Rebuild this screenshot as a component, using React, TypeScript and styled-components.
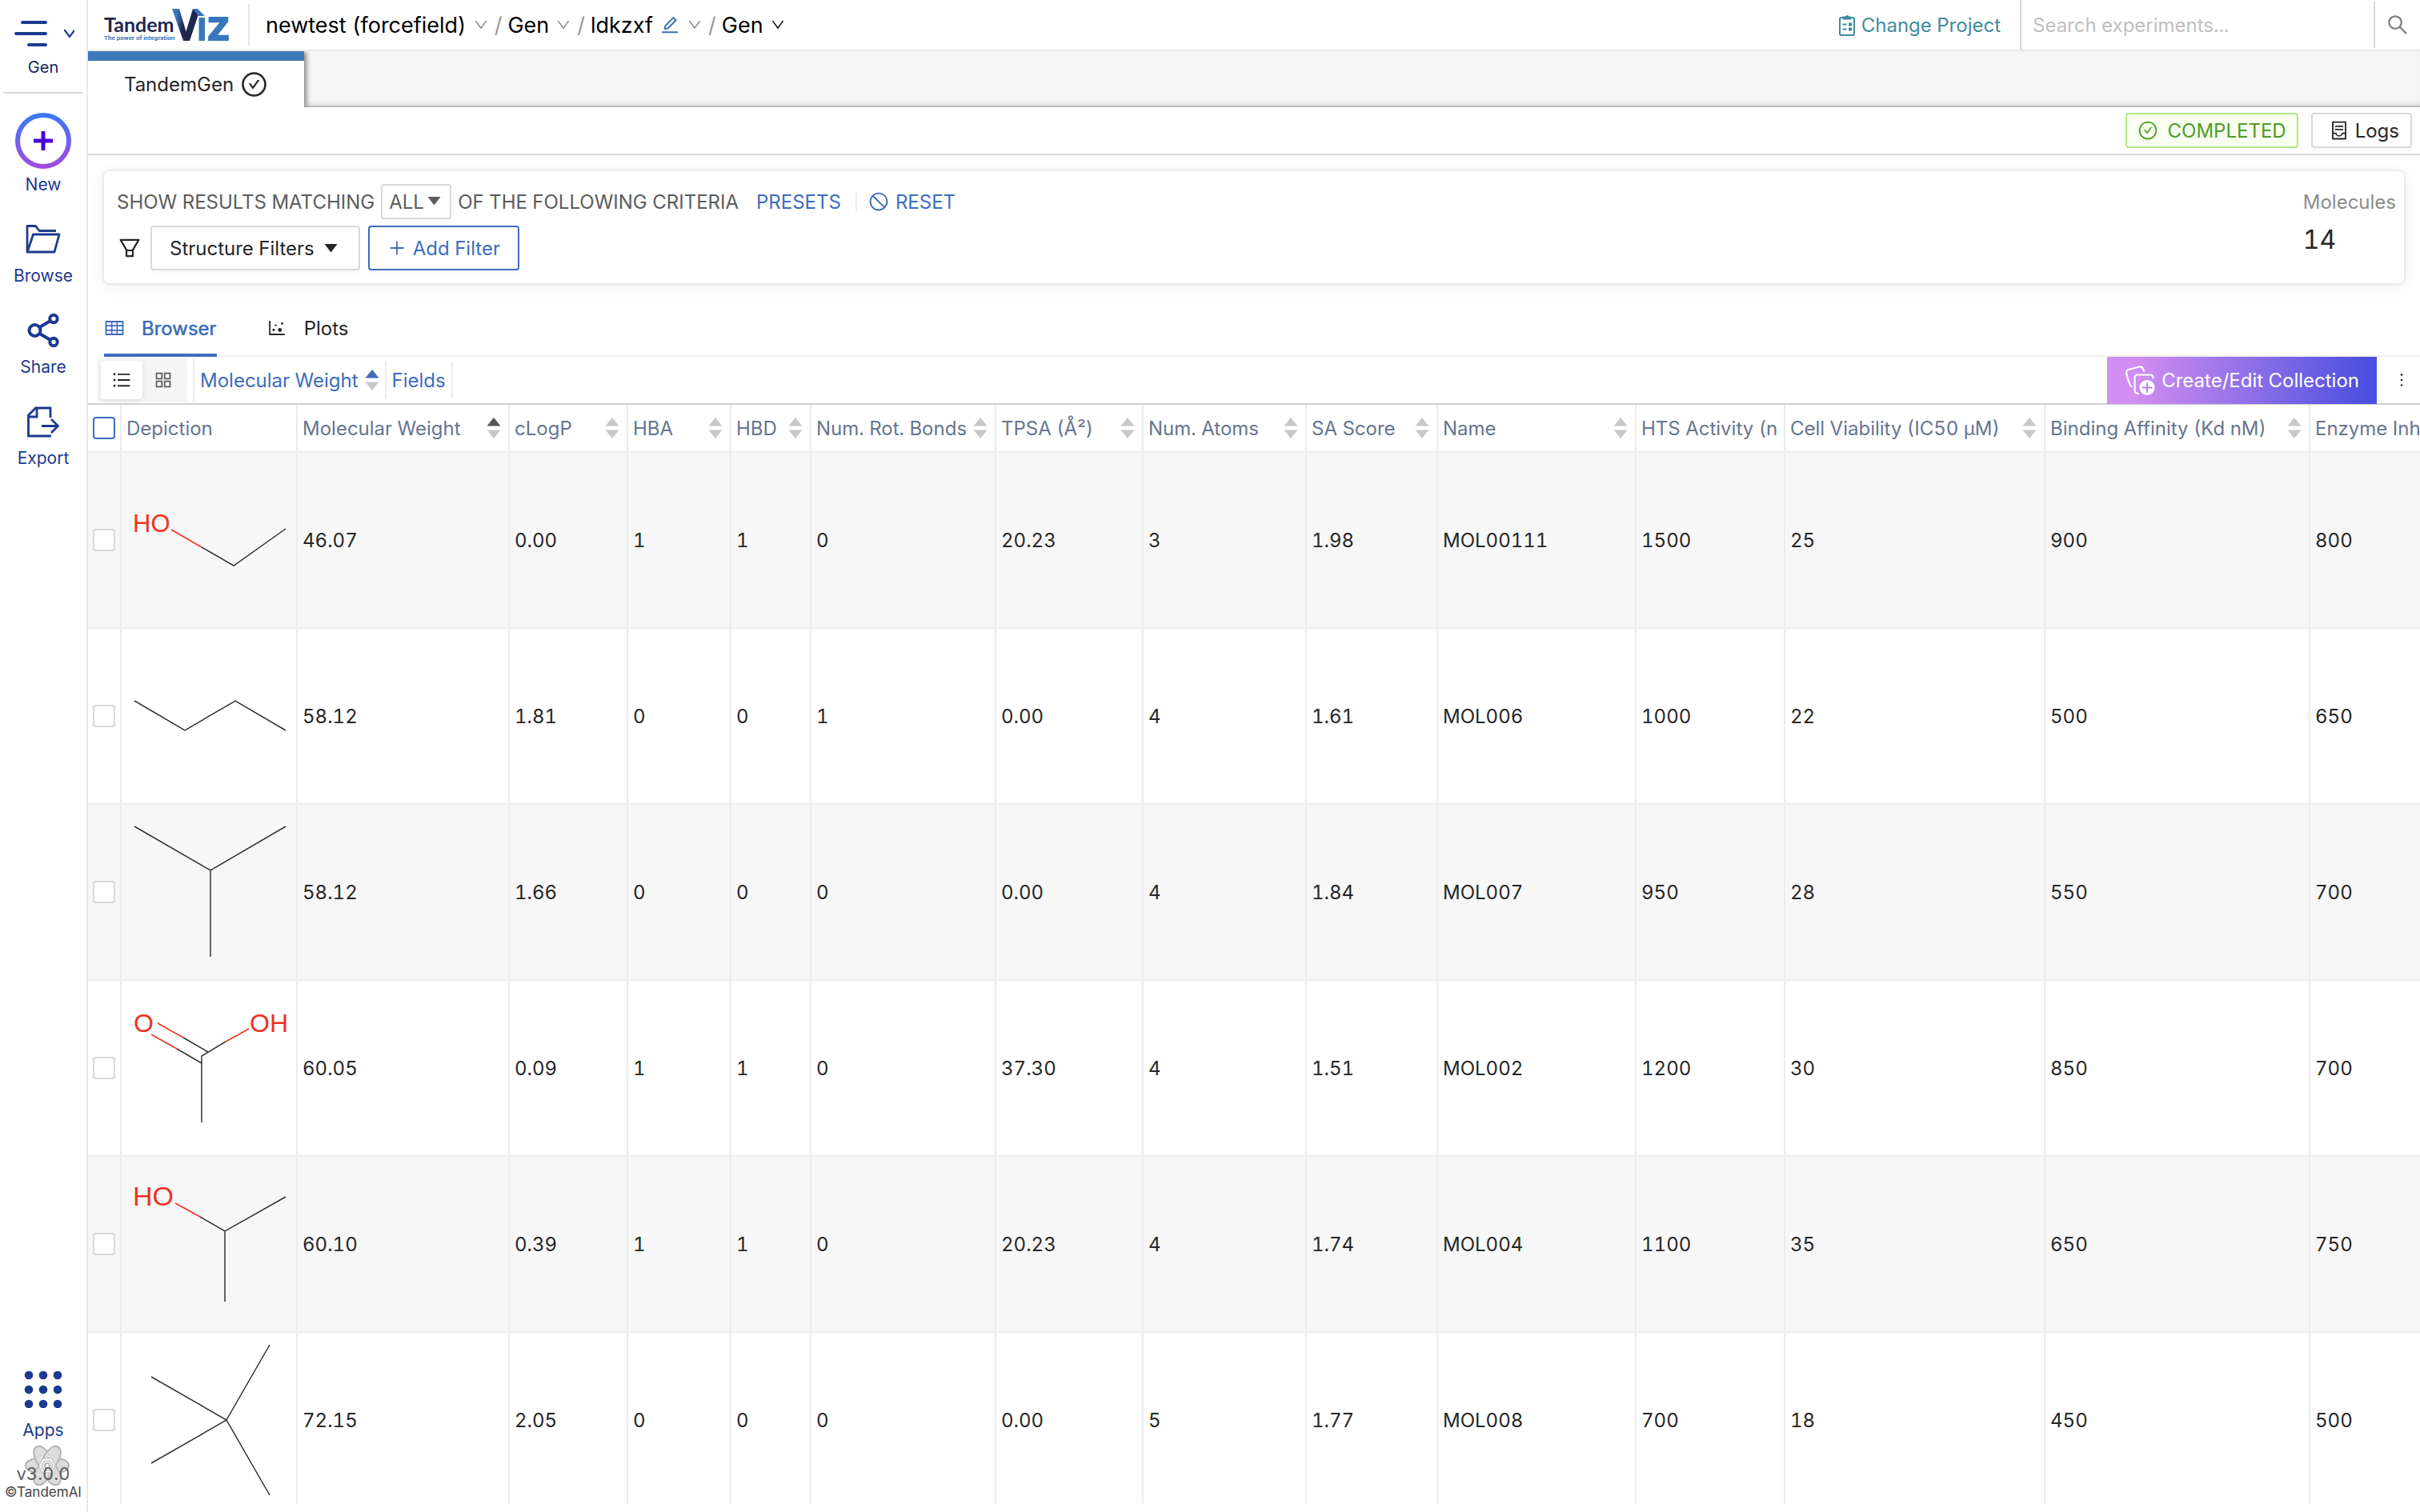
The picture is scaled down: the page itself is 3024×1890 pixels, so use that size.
import React from 'react';
import styled, { createGlobalStyle, css } from 'styled-components';
import {
  AiOutlineAppstore,
  AiOutlineCheckCircle,
  AiOutlineContainer,
  AiOutlineDotChart,
  AiOutlineDown,
  AiOutlineEdit,
  AiOutlineFilter,
  AiOutlineFolderOpen,
  AiOutlineMore,
  AiOutlinePlus,
  AiOutlineSearch,
  AiOutlineShareAlt,
  AiOutlineStop,
  AiOutlineTable,
  AiOutlineUnorderedList,
} from 'react-icons/ai';

const color = {
  text: '#262626',
  muted: '#5c5c5c',
  faint: '#8c8c8c',
  blue: '#3c6dbd',
  navy: '#1c3a8f',
  teal: '#3f8c9c',
  head: '#66758f',
  line: '#ececec',
  border: '#d9d9d9',
  stripe: '#f7f7f7',
};

const GlobalStyle = createGlobalStyle`
  *, *::before, *::after { box-sizing: border-box; }
  html, body, #root { height: 100%; }
  body {
    margin: 0;
    background: #fff;
    color: ${color.text};
    font: 400 24px/33px Inter, "Liberation Sans", sans-serif;
    font-variant-numeric: tabular-nums;
    overflow: hidden;
  }
  button, input, select { font: inherit; color: inherit; margin: 0; }
  button { background: none; border: 0; padding: 0; cursor: pointer; }
  a { color: inherit; text-decoration: none; }
  svg { display: block; flex: none; }
`;

const Shell = styled.div`
  display: grid;
  grid-template-columns: 110px minmax(0, 1fr);
  height: 100vh;
`;

/* ---------- Sidebar ---------- */

const Sidebar = styled.nav`
  display: flex;
  flex-direction: column;
  align-items: center;
  border-right: 2px solid #e8e8e8;
  color: ${color.navy};
  font-size: 21px;
  line-height: 28px;
`;

const SideHead = styled.button`
  display: flex;
  flex-direction: column;
  align-items: center;
  gap: 12px;
  width: 100px;
  height: 117px;
  padding-top: 26px;
  margin-bottom: 24px;
  border-bottom: 2px solid ${color.border};
  color: #14235a;
  font-size: 20px;
`;

const SideItem = styled.button<{ $gap?: number }>`
  display: flex;
  flex-direction: column;
  align-items: center;
  gap: ${(p) => p.$gap ?? 10}px;
  margin-bottom: 32px;
`;

const IconSlot = styled.span`
  display: grid;
  place-items: center;
  width: 48px;
  height: 44px;
`;

const SideFoot = styled.div`
  display: flex;
  flex-direction: column;
  align-items: center;
  margin-top: auto;
  padding-bottom: 16px;
`;

const AppsButton = styled(SideItem)`
  margin-bottom: 26px;
`;

const Version = styled.div`
  position: relative;
  color: ${color.muted};
  font-size: 22px;

  svg {
    position: absolute;
    left: 9px;
    bottom: -2px;
    z-index: -1;
  }
`;

const Copyright = styled.div`
  color: #444;
  font-size: 17px;
  line-height: 18px;
`;

/* ---------- Header ---------- */

const Main = styled.main`
  display: flex;
  flex-direction: column;
  min-width: 0;
  height: 100vh;
`;

const TopBar = styled.header`
  display: flex;
  align-items: center;
  flex: none;
  height: 64px;
  border-bottom: 2px solid #e8e8e8;
`;

const Brand = styled.a`
  display: flex;
  align-items: center;
  height: 52px;
  padding: 0 20px;
  border-right: 2px solid #e5e5e5;

  svg {
    overflow: visible;
  }
`;

const Crumbs = styled.nav`
  display: flex;
  align-items: center;
  gap: 7px;
  margin-left: 20px;
  color: #000;
  font-size: 27px;
`;

const Crumb = styled.button<{ $open?: boolean }>`
  display: flex;
  align-items: center;
  gap: 8px;

  svg:last-child {
    color: ${(p) => (p.$open ? '#111' : color.faint)};
  }
`;

const Slash = styled.span`
  color: #999;
`;

const ProjectLink = styled.a`
  display: flex;
  align-items: center;
  gap: 8px;
  margin: 0 24px 0 auto;
  color: ${color.teal};
`;

const SearchForm = styled.form`
  display: flex;
  align-items: center;
  align-self: stretch;
  width: 500px;
  border-left: 2px solid ${color.border};
`;

const SearchInput = styled.input`
  flex: 1;
  min-width: 0;
  height: 58px;
  padding: 0 14px;
  border: 0;
  outline: 0;
  background: none;

  &::placeholder {
    color: #bfbfbf;
    opacity: 1;
  }
`;

const SearchButton = styled.button`
  display: grid;
  place-items: center;
  width: 58px;
  height: 58px;
  border-left: 2px solid ${color.border};
  color: #7d7d7d;
`;

/* ---------- Experiment tabs and status ---------- */

const TabStrip = styled.div`
  display: flex;
  flex: none;
  height: 70px;
  background: #f6f6f6;
  box-shadow: inset 0 -2px 0 #bdbdbd, inset 0 -8px 8px -6px rgba(0, 0, 0, 0.18);
`;

const ExperimentTab = styled.button`
  display: flex;
  align-items: center;
  justify-content: center;
  gap: 8px;
  width: 270px;
  border-top: 12px solid #3d79b8;
  background: #fff;
  box-shadow: 4px 0 6px -1px rgba(0, 0, 0, 0.45);
  clip-path: inset(0 -16px 0 0);
`;

const StatusRow = styled.div`
  display: flex;
  align-items: center;
  justify-content: flex-end;
  flex: none;
  gap: 16px;
  height: 60px;
  padding-right: 10px;
  border-bottom: 2px solid ${color.border};
`;

const StatusTag = styled.span`
  display: flex;
  align-items: center;
  gap: 12px;
  height: 44px;
  padding: 0 13px;
  border: 2px solid #b7e58c;
  border-radius: 4px;
  background: #f8ffee;
  color: #4f9a2a;
`;

const outlined = css`
  display: flex;
  align-items: center;
  border: 2px solid ${color.border};
  border-radius: 4px;
  background: #fff;
  box-shadow: 0 4px 0 rgba(0, 0, 0, 0.02);
`;

const LogsButton = styled.button`
  ${outlined}
  gap: 7px;
  height: 44px;
  padding: 0 14px 0 20px;
`;

/* ---------- Filter card ---------- */

const FilterCard = styled.section`
  display: flex;
  justify-content: space-between;
  flex: none;
  margin: 20px 20px 20px;
  padding: 16px 10px 16px 16px;
  border-radius: 6px;
  background: #fff;
  box-shadow: 0 0 4px rgba(0, 0, 0, 0.16), 0 4px 24px rgba(40, 60, 90, 0.08);
`;

const FilterRows = styled.div`
  display: flex;
  flex-direction: column;
  gap: 8px;
`;

const FilterRow = styled.div<{ $height: number; $gap: number }>`
  display: flex;
  align-items: center;
  gap: ${(p) => p.$gap}px;
  height: ${(p) => p.$height}px;
  color: ${color.muted};
  white-space: nowrap;
`;

const MatchField = styled.span`
  position: relative;
  display: flex;

  svg {
    position: absolute;
    right: 13px;
    top: 15px;
    pointer-events: none;
  }
`;

const MatchSelect = styled.select`
  ${outlined}
  appearance: none;
  width: 88px;
  height: 44px;
  padding: 0 8px;
  color: ${color.muted};
`;

const LinkButton = styled.button`
  display: flex;
  align-items: center;
  gap: 8px;
  color: ${color.blue};
`;

const Presets = styled(LinkButton)`
  margin: 0 10px 0 14px;
`;

const Reset = styled(LinkButton)`
  margin-left: 6px;
`;

const Divider = styled.span<{ $height: number }>`
  width: 2px;
  height: ${(p) => p.$height}px;
  background: ${color.line};
`;

const FunnelSlot = styled.span`
  display: grid;
  place-items: center;
  width: 32px;
  color: ${color.text};
`;

const StructureButton = styled.button`
  ${outlined}
  gap: 12px;
  height: 56px;
  padding: 0 26px 0 22px;
  color: ${color.text};
`;

const AddButton = styled.button`
  ${outlined}
  gap: 8px;
  height: 56px;
  padding: 0 22px;
  border-color: ${color.blue};
  color: ${color.blue};
`;

const Stat = styled.dl`
  margin: 6px 0 0;

  dt {
    color: ${color.faint};
  }

  dd {
    margin: 10px 0 0;
    font-size: 32px;
    line-height: 41px;
  }
`;

/* ---------- View tabs and toolbar ---------- */

const ViewTabs = styled.div`
  display: flex;
  flex: none;
  gap: 62px;
  margin-left: 20px;
  box-shadow: inset 0 -2px 0 #f0f0f0;
`;

const ViewTab = styled.button<{ $active?: boolean }>`
  display: flex;
  align-items: center;
  gap: 21px;
  height: 72px;
  color: ${(p) => (p.$active ? color.blue : color.text)};
  text-shadow: ${(p) => (p.$active ? '0 0 1px currentColor' : 'none')};
  box-shadow: ${(p) => (p.$active ? `inset 0 -4px 0 ${color.blue}` : 'none')};
`;

const Toolbar = styled.div`
  display: flex;
  align-items: center;
  flex: none;
  gap: 7px;
  height: 60px;
  padding: 0 0 2px 12px;
  box-shadow: inset 0 -2px 0 #d0d0d0;
`;

const Segmented = styled.div`
  display: flex;
  align-items: center;
  gap: 4px;
  height: 56px;
  padding: 0 8px 0 4px;
  border-radius: 4px;
  background: #f5f5f5;
`;

const Segment = styled.button<{ $active?: boolean }>`
  display: grid;
  place-items: center;
  width: ${(p) => (p.$active ? 52 : 44)}px;
  height: 48px;
  border-radius: 4px;
  color: ${(p) => (p.$active ? color.text : color.muted)};
  background: ${(p) => (p.$active ? '#fff' : 'none')};
  box-shadow: ${(p) => (p.$active ? '0 2px 6px rgba(0, 0, 0, 0.1)' : 'none')};
`;

const CollectionButton = styled.button`
  display: flex;
  align-items: center;
  align-self: flex-start;
  gap: 8px;
  height: 59px;
  margin-left: auto;
  padding: 0 22px;
  background: linear-gradient(90deg, #d28ef0 10%, #4a50df 97%);
  color: #fff;
`;

const MoreButton = styled.button`
  display: grid;
  place-items: center;
  width: 47px;
  height: 48px;
`;

/* ---------- Results table ---------- */

const TableArea = styled.div`
  flex: 1;
  min-height: 0;
  margin-bottom: 10px;
  overflow: hidden;
`;

const Table = styled.table`
  table-layout: fixed;
  width: 3200px;
  border-collapse: separate;
  border-spacing: 0;
`;

const cell = css`
  padding: 0 6px;
  border-right: 2px solid ${color.line};
  border-bottom: 2px solid ${color.line};
  text-align: left;
`;

const HeadCell = styled.th`
  ${cell}
  height: 60px;
  color: ${color.head};
  font-weight: 400;
`;

const HeadInner = styled.div`
  display: flex;
  align-items: center;
  justify-content: space-between;
  overflow: hidden;
  white-space: nowrap;

  svg {
    margin-right: 3px;
  }
`;

const Row = styled.tr`
  &:nth-child(odd) {
    background: ${color.stripe};
  }
`;

const Cell = styled.td`
  ${cell}
  height: 220px;
`;

const DrawingCell = styled(Cell)`
  padding: 0;
`;

const Checkbox = styled.input<{ $accent?: boolean }>`
  appearance: none;
  display: block;
  width: 28px;
  height: 28px;
  margin: 0;
  border: 2px solid ${(p) => (p.$accent ? color.blue : color.border)};
  border-radius: 4px;
  background: #fff;
`;

/* ---------- Drawings ---------- */

const Caret = ({ fill = 'currentColor' }: { fill?: string }) => (
  <svg width="17" height="12" viewBox="0 0 17 12" fill={fill}>
    <path d="M0.5 1h16L8.5 11.500z" />
  </svg>
);

const Sorter = ({ up = '#c8c8c8' }: { up?: string }) => (
  <svg width="18" height="28" viewBox="0 0 18 28">
    <path d="M9 1l8.500 10.500H.5z" fill={up} />
    <path d="M9 27l8.500-10.500H.5z" fill="#c8c8c8" />
  </svg>
);

const MenuGlyph = () => (
  <svg width="78" height="32" viewBox="0 0 78 32" fill="none" stroke={color.navy} strokeLinecap="round">
    <path d="M13 2h29M5 16h37M21 30h21" strokeWidth="4" />
    <path d="M66 12l6 8 6-8" strokeWidth="2.200" />
  </svg>
);

const NewGlyph = () => (
  <svg width="70" height="70" viewBox="0 0 70 70" fill="none">
    <defs>
      <linearGradient id="ring" x1="0" y1="0" x2="0" y2="1">
        <stop offset="0" stopColor="#3a78f8" />
        <stop offset="1" stopColor="#a04ae0" />
      </linearGradient>
    </defs>
    <circle cx="35" cy="35" r="32" stroke="url(#ring)" strokeWidth="6" />
    <path d="M35 23v24M23 35h24" stroke="#4607d6" strokeWidth="5" />
  </svg>
);

const FolderGlyph = () => (
  <svg width="44" height="36" viewBox="0 0 44 36" fill="none" stroke="currentColor" strokeWidth="2.800" strokeLinejoin="round">
    <path d="M38 7.500H17L12.500 1.500H2V34h34L42 12H9.500L2.500 33" />
  </svg>
);

const ShareGlyph = () => (
  <svg width="40" height="44" viewBox="0 0 40 44" fill="none" stroke="currentColor" strokeWidth="4">
    <circle cx="9.500" cy="22" r="7" />
    <circle cx="33" cy="7.500" r="4.700" />
    <circle cx="33" cy="36.500" r="4.700" />
    <path d="M15.500 18L29 10M15.500 26L29 34" />
  </svg>
);

const ExportGlyph = () => (
  <svg width="42" height="40" viewBox="0 0 42 40" fill="none" stroke="currentColor" strokeWidth="2.800">
    <path d="M30 15V3H11.500L2.500 12v26H31" />
    <path d="M13 3v11H3M19 25.500h20M31 17l8.500 8.500L31 34" />
  </svg>
);

const AppsGlyph = () => (
  <svg width="48" height="46" viewBox="0 0 48 46" fill="currentColor">
    {[5, 23, 41].map((y) =>
      [6, 24, 42].map((x) => <circle key={`${x}-${y}`} cx={x} cy={y} r="5.300" />),
    )}
  </svg>
);

const FlowerGlyph = () => (
  <svg width="58" height="52" viewBox="-29 -26 58 52">
    {[0, 180, 60, 240, 120, 300].map((a) => (
      <path
        key={a}
        d="M2-9C12-12 27-9 27 0S12 12 2 9z"
        fill="#dcdcdc"
        stroke="#adadad"
        strokeWidth="1.800"
        transform={`rotate(${a}) scale(1 0.9)`}
      />
    ))}
    <path d="M-11 0L-5.500-9.500h11L11 0 5.500 9.500h-11z" fill="#b4b4b4" />
    <path d="M-9 0l4.500-7.500h9L9 0 4.500 7.500h-9z" fill="none" stroke="#fff" strokeWidth="1.800" />
    <path d="M-5.500 0l2.500-4.500h6L5.500 0 3 4.500h-6z" fill="none" stroke="#fff" strokeWidth="1.500" />
    <circle r="2" fill="#fff" />
  </svg>
);

const Logo = () => (
  <svg width="160" height="48" viewBox="0 0 160 48" role="img" aria-label="TandemViz">
    <defs>
      <linearGradient id="arm" x1="0" y1="0" x2="1" y2="0.400">
        <stop offset="0.350" stopColor="#3a76bb" />
        <stop offset="0.850" stopColor="#1f2750" />
      </linearGradient>
    </defs>
    <text x="0" y="33" fontFamily="Lato, sans-serif" fontSize="25" fontWeight="700" fill="#1f2750">
      Tandem
    </text>
    <text x="0" y="43" fontFamily="Roboto, sans-serif" fontSize="8" fontWeight="700" fill="#3a76bb">
      The power of integration
    </text>
    <path d="M85 4h9l9 30-4 10z" fill="url(#arm)" />
    <path d="M99 44h8l11-33-4-7h-3z" fill="#1f2750" />
    <path d="M111 4h6l9 9h-8z" fill="#3a76bb" />
    <path d="M118.500 15h7.500v29h-7.500z" fill="#3a76bb" />
    <text x="127" y="44" fontFamily="Inter, sans-serif" fontSize="55" fontWeight="800" fill="#3a76bb">
      z
    </text>
  </svg>
);

const ClipboardGlyph = () => (
  <svg width="20" height="28" viewBox="0 0 20 28" fill="none" stroke="currentColor" strokeWidth="2">
    <rect x="1" y="5" width="18" height="22" rx="2" />
    <path d="M5 4h3a2.500 2.500 0 0 1 4.500 0H15v3H5z" fill="currentColor" strokeWidth="1" />
    <path d="M4.500 13.500h5M4.500 19.500h5" />
    <path d="M12 13.500h4M12 19.500h4" strokeWidth="4" />
  </svg>
);

const CollectionGlyph = () => (
  <svg width="38" height="38" viewBox="0 0 38 38" fill="none" stroke="#fff" strokeWidth="2.200" strokeLinecap="round">
    <path d="M8 26C5 21 3 14 2 9c0-2 1-3.500 3-4L18 1.500c3-.5 4 .5 5 2.500l1 3" />
    <path d="M17 35c-3 0-4.500-1.500-4.500-4V15c0-2 1.500-3.500 3.500-3.500h16c2 0 3.500 1.500 3.500 4" />
    <circle cx="28" cy="27.500" r="9.500" fill="#fff" stroke="none" />
    <path d="M28 22v11M22.500 27.500h11" stroke="#b07be8" strokeWidth="1.800" />
  </svg>
);

type Drawing = {
  dark: string;
  red?: string;
  labels?: { x: number; y: number; size: number; text: string }[];
};

const Molecule = ({ dark, red, labels = [] }: Drawing) => (
  <svg width="218" height="218" viewBox="0 0 218 218" fill="none" strokeWidth="1.500">
    <path d={dark} stroke="#333" />
    {red && <path d={red} stroke="#ee3322" />}
    {labels.map((l) => (
      <text key={l.text} x={l.x} y={l.y} fontSize={l.size} fill="#ee3322" fontFamily='"Liberation Sans", Arial, sans-serif'>
        {l.text}
      </text>
    ))}
  </svg>
);

/* ---------- Data ---------- */

const columns = [
  { label: 'Molecular Weight', width: 265, sorted: true },
  { label: 'cLogP', width: 148 },
  { label: 'HBA', width: 129 },
  { label: 'HBD', width: 100 },
  { label: 'Num. Rot. Bonds', width: 231 },
  { label: 'TPSA (Å²)', width: 184 },
  { label: 'Num. Atoms', width: 204 },
  { label: 'SA Score', width: 164 },
  { label: 'Name', width: 248 },
  { label: 'HTS Activity (nM)', width: 186, plain: true },
  { label: 'Cell Viability (IC50 µM)', width: 325 },
  { label: 'Binding Affinity (Kd nM)', width: 331 },
  { label: 'Enzyme Inhibition', width: 423, plain: true },
];

const rows: { values: string[]; drawing: Drawing }[] = [
  {
    values: ['46.07', '0.00', '1', '1', '0', '20.23', '3', '1.98', 'MOL00111', '1500', '25', '900', '800'],
    drawing: {
      dark: 'M100 118L140 141L205 95',
      red: 'M62 96L100 118',
      labels: [{ x: 14, y: 99, size: 31, text: 'HO' }],
    },
  },
  {
    values: ['58.12', '1.81', '0', '0', '1', '0.00', '4', '1.61', 'MOL006', '1000', '22', '500', '650'],
    drawing: { dark: 'M16 90L79 127L142 90L205 127' },
  },
  {
    values: ['58.12', '1.66', '0', '0', '0', '0.00', '4', '1.84', 'MOL007', '950', '28', '550', '700'],
    drawing: { dark: 'M16 27L111 82L205 27M111 82V190' },
  },
  {
    values: ['60.05', '0.09', '1', '1', '0', '37.30', '4', '1.51', 'MOL002', '1200', '30', '850', '700'],
    drawing: {
      dark: 'M77 71L108 89M69 85L100 103M130 76L100 94V177',
      red: 'M45 53L77 71M37 67L69 85M159 60L130 76',
      labels: [
        { x: 15, y: 64, size: 32, text: 'O' },
        { x: 160, y: 64, size: 32, text: 'OH' },
      ],
    },
  },
  {
    values: ['60.10', '0.39', '1', '1', '0', '20.23', '4', '1.74', 'MOL004', '1100', '35', '650', '750'],
    drawing: {
      dark: 'M98 75L129 93L205 50M129 93V181',
      red: 'M67 58L98 75',
      labels: [{ x: 14, y: 61, size: 34, text: 'HO' }],
    },
  },
  {
    values: ['72.15', '2.05', '0', '0', '0', '0.00', '5', '1.77', 'MOL008', '700', '18', '450', '500'],
    drawing: { dark: 'M185 15L131 109L185 203M37 55L131 109L37 163' },
  },
];

export default function App() {
  return (
    <Shell>
      <GlobalStyle />

      <Sidebar aria-label="Workspace">
        <SideHead>
          <MenuGlyph />
          Gen
        </SideHead>
        <SideItem $gap={6}>
          <NewGlyph />
          New
        </SideItem>
        <SideItem>
          <IconSlot><FolderGlyph /></IconSlot>
          Browse
        </SideItem>
        <SideItem>
          <IconSlot><ShareGlyph /></IconSlot>
          Share
        </SideItem>
        <SideItem>
          <IconSlot><ExportGlyph /></IconSlot>
          Export
        </SideItem>
        <SideFoot>
          <AppsButton $gap={14}>
            <AppsGlyph />
            Apps
          </AppsButton>
          <Version>
            <FlowerGlyph />
            v3.0.0
          </Version>
          <Copyright>©TandemAI</Copyright>
        </SideFoot>
      </Sidebar>

      <Main>
        <TopBar>
          <Brand href="#home"><Logo /></Brand>
          <Crumbs aria-label="Breadcrumb">
            <Crumb>newtest (forcefield) <AiOutlineDown size={20} /></Crumb>
            <Slash>/</Slash>
            <Crumb>Gen <AiOutlineDown size={20} /></Crumb>
            <Slash>/</Slash>
            <Crumb>
              ldkzxf <AiOutlineEdit size={26} color={color.blue} /> <AiOutlineDown size={20} />
            </Crumb>
            <Slash>/</Slash>
            <Crumb $open>Gen <AiOutlineDown size={20} /></Crumb>
          </Crumbs>
          <ProjectLink href="#projects"><ClipboardGlyph />Change Project</ProjectLink>
          <SearchForm role="search">
            <SearchInput type="text" aria-label="Search experiments" placeholder="Search experiments..." />
            <SearchButton type="button" aria-label="Search"><AiOutlineSearch size={30} /></SearchButton>
          </SearchForm>
        </TopBar>

        <TabStrip>
          <ExperimentTab>TandemGen <AiOutlineCheckCircle size={35} /></ExperimentTab>
        </TabStrip>

        <StatusRow>
          <StatusTag><AiOutlineCheckCircle size={26} />COMPLETED</StatusTag>
          <LogsButton><AiOutlineContainer size={26} />Logs</LogsButton>
        </StatusRow>

        <FilterCard>
          <FilterRows>
            <FilterRow $height={44} $gap={8}>
              <label htmlFor="match">SHOW RESULTS MATCHING</label>
              <MatchField>
                <MatchSelect id="match" defaultValue="ALL">
                  <option>ALL</option>
                  <option>ANY</option>
                </MatchSelect>
                <Caret />
              </MatchField>
              <span>OF THE FOLLOWING CRITERIA</span>
              <Presets>PRESETS</Presets>
              <Divider $height={24} />
              <Reset><AiOutlineStop size={26} />RESET</Reset>
            </FilterRow>
            <FilterRow $height={56} $gap={10}>
              <FunnelSlot><AiOutlineFilter size={32} /></FunnelSlot>
              <StructureButton>Structure Filters <Caret /></StructureButton>
              <AddButton><AiOutlinePlus size={24} />Add Filter</AddButton>
            </FilterRow>
          </FilterRows>
          <Stat>
            <dt>Molecules</dt>
            <dd>14</dd>
          </Stat>
        </FilterCard>

        <ViewTabs>
          <ViewTab $active><AiOutlineTable size={26} />Browser</ViewTab>
          <ViewTab><AiOutlineDotChart size={26} />Plots</ViewTab>
        </ViewTabs>

        <Toolbar>
          <Segmented>
            <Segment $active aria-label="List view"><AiOutlineUnorderedList size={26} /></Segment>
            <Segment aria-label="Grid view"><AiOutlineAppstore size={26} /></Segment>
          </Segmented>
          <Divider $height={56} />
          <LinkButton>Molecular Weight <Sorter up={color.blue} /></LinkButton>
          <Divider $height={46} />
          <LinkButton>Fields</LinkButton>
          <Divider $height={46} />
          <CollectionButton><CollectionGlyph />Create/Edit Collection</CollectionButton>
          <MoreButton aria-label="More"><AiOutlineMore size={24} /></MoreButton>
        </Toolbar>

        <TableArea>
          <Table>
            <colgroup>
              <col style={{ width: 42 }} />
              <col style={{ width: 220 }} />
              {columns.map((c) => <col key={c.label} style={{ width: c.width }} />)}
            </colgroup>
            <thead>
              <tr>
                <HeadCell><Checkbox type="checkbox" $accent aria-label="Select all" /></HeadCell>
                <HeadCell>Depiction</HeadCell>
                {columns.map((c) => (
                  <HeadCell key={c.label}>
                    <HeadInner>
                      {c.label}
                      {!c.plain && <Sorter up={c.sorted ? '#555' : undefined} />}
                    </HeadInner>
                  </HeadCell>
                ))}
              </tr>
            </thead>
            <tbody>
              {rows.map((r) => (
                <Row key={r.values[8]}>
                  <Cell><Checkbox type="checkbox" aria-label={`Select ${r.values[8]}`} /></Cell>
                  <DrawingCell><Molecule {...r.drawing} /></DrawingCell>
                  {r.values.map((v, i) => <Cell key={columns[i].label}>{v}</Cell>)}
                </Row>
              ))}
            </tbody>
          </Table>
        </TableArea>
      </Main>
    </Shell>
  );
}
